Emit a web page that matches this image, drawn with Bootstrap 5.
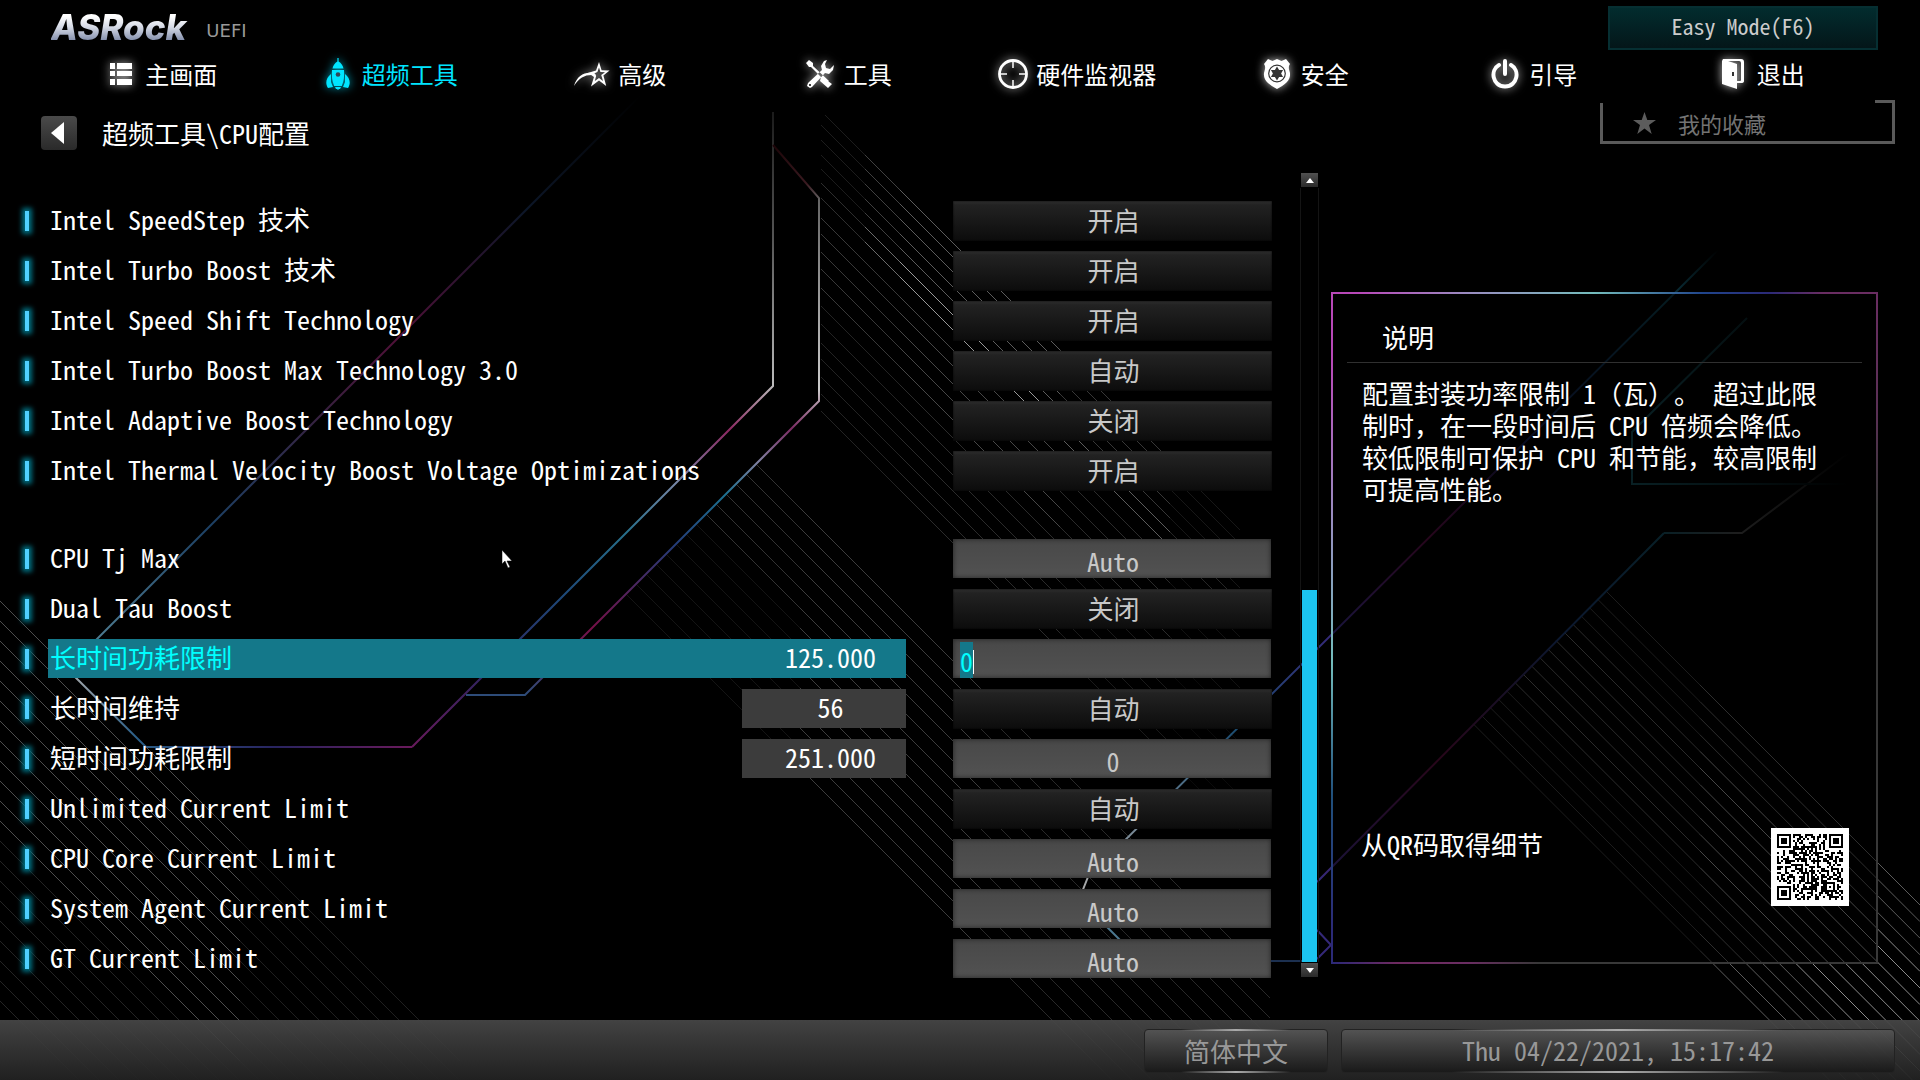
<!DOCTYPE html>
<html lang="zh-CN">
<head>
<meta charset="utf-8">
<meta name="viewport" content="width=device-width, initial-scale=1">
<title>ASRock UEFI</title>
<link rel="stylesheet" href="https://cdn.jsdelivr.net/npm/bootstrap@5.3.0/dist/css/bootstrap.min.css">
<style>
body{background:#000;color:#fff;font-family:"Noto Sans Mono CJK SC","Noto Sans CJK SC","Liberation Mono",monospace;font-size:26px;line-height:32px;text-spacing-trim:space-all}
.backdrop{z-index:0}
.layer{z-index:1}
.topbar{height:50px;padding:6px 42px 0 51px}
.logo{font:italic 800 35px/42px Inter,sans-serif;background:linear-gradient(#fff 25%,#d5dae6 50%,#7b87a6 85%);-webkit-background-clip:text;background-clip:text;color:transparent;padding-right:4px}
.logo-sub{font:400 18px/18px "DejaVu Sans",sans-serif;color:#999;padding-top:8px}
.easy{width:270px;height:44px;font-size:22px;line-height:24px;color:#ccc;background:linear-gradient(#022c2e,#041619);border:2px solid #062f32;padding:0 0 6px}
.mainnav{padding:0 43px 2px 49px;height:50px}
.mainnav .nav-link{color:#fff;font-size:24px;line-height:32px;white-space:nowrap}
.mainnav .nav-link.active{color:#00e5ff}
.mainnav svg{filter:drop-shadow(0 0 5px #bbb)}
.mainnav .active svg{filter:drop-shadow(0 0 5px #00a0b8)}
.crumbs{height:50px;padding:0 25px 0 41px}
.back{width:36px;height:34px;margin-top:16px;background:linear-gradient(#4a4a4a,#2a2a2a);border:0;border-radius:4px}
.trail{margin:17px 0 0 25px}
.fav{width:295px;height:44px;font-size:22px;color:#737373;border:0 solid #5a5a5a;border-width:0 3px 3px 0;padding:5px 0 0 33px}
.fav::before{content:"";position:absolute;left:0;top:3px;bottom:0;width:3px;background:#5a5a5a}
.fav::after{content:"";position:absolute;right:0;top:0;width:17px;height:3px;background:#5a5a5a}
.work{padding:23px 42px 0 0}
.settings{padding:28px 29px 0 0}
.setting{height:40px;margin-bottom:10px}
.setting.split{margin-top:48px}
.mark-col{width:48px}
.tick{width:4px;height:20px;background:#4fd0ff;box-shadow:0 0 5px 3px #006f80;margin-left:25px}
.name{padding-left:2px;height:39px;line-height:36px;margin-right:47px}
.reading{width:164px;height:39px;background:#3c3c3c;padding-left:13px;text-align:center}
.active-row .name{background:#14788a;color:#0ff}
.active-row .reading{background:transparent;color:#fff}
.ctl{width:319px;height:40px;border-radius:0;font-size:26px;line-height:32px;color:#c8c8c8;text-align:center;border:0;padding:0}
select.ctl{background:linear-gradient(#303030,#222 10%,#0c0c0c);text-align-last:center;appearance:none;box-shadow:inset 0 0 2px #000;padding-left:2px;padding-bottom:2px}
select.ctl:focus{color:#fff}
input.ctl{height:39px;width:318px;margin-right:1px;background:linear-gradient(#484848,#525252);box-shadow:inset 0 0 5px #222;padding:4px 0 0 2px}
input.editing{text-align:left;padding-left:7px;color:#0ff;caret-color:#fff}
input:focus{outline:0}
input::selection{background:#14788a;color:#0ff}
.caret{left:20px;top:11px;width:1px;height:24px;background:#fff}
.scroller{width:17px;margin-bottom:43px}
.arrow{width:17px;height:14px;border:0;background:linear-gradient(#505050,#2a2a2a);padding:0;line-height:0}
.track{box-shadow:-2px 0 0 -1px #141414,2px 0 0 -1px #141414}
.thumb{height:48%;width:15px;background:#1cc5f0;margin:0 1px 1px}
.help{width:547px;margin:119px 0 56px 13px;padding:2px 16px;
  background:
    linear-gradient(90deg,#b848b8 5%,#9a8cc0 25%,#74bcbc 48%,#20458c 68%,#2b2a78 80%,#6a2d62 90%) top/100% 2px no-repeat,
    linear-gradient(#b848b8 10%,#9a8cc0 33%,#74bcbc 55%,#20507c 75%,#2b2a78 95%) left/2px 100% no-repeat,
    linear-gradient(90deg,#2b2878,#6e2a60 12%,#6a2d62 25%,#383838 38%) bottom/100% 2px no-repeat,
    linear-gradient(#6a2d62,#5a3055 18%,#383838 32%) right/2px 100% no-repeat,
    rgba(0,0,0,.5)}
.help h2{font-size:26px;line-height:36px;font-weight:400;margin:0;padding:25px 0 7px 35px;border-bottom:1px solid #303030}
.help p{margin:14px 35px 0 15px}
.qr-line{padding:0 13px 56px 14px}
.statusbar{height:60px;background:linear-gradient(rgba(70,70,70,.95),rgba(60,60,60,.9) 35%,rgba(34,34,34,.95));padding:9px 25px 7px;gap:13px}
.pill{height:44px;border:1px solid #222;border-radius:4px;background:linear-gradient(rgba(88,88,88,.8),rgba(24,24,24,.85));color:#989898;line-height:40px;padding:0;position:relative;text-align:center}
.pill::before,.pill::after{content:"";position:absolute;left:20%;right:20%;height:2px;top:-1px;background:linear-gradient(90deg,transparent,#aaa,transparent)}
.pill::after{top:auto;bottom:-1px}
.lang{width:184px}
.clock{width:554px}
.pointer{left:502px;top:550px;z-index:3}
</style>
<script src="https://cdn.jsdelivr.net/npm/bootstrap@5.3.0/dist/js/bootstrap.bundle.min.js"></script>
</head>
<body class="d-flex flex-column min-vh-100 position-relative overflow-hidden">

<svg class="backdrop position-absolute top-0 start-0 w-100 h-100" viewBox="0 0 1920 1080" preserveAspectRatio="none" fill="none" stroke-width="2" aria-hidden="true">
  <defs>
    <linearGradient id="ga" gradientUnits="userSpaceOnUse" x1="640" y1="96" x2="67" y2="669">
      <stop offset="0" stop-color="#000"/><stop offset=".2" stop-color="#0c1628"/><stop offset=".42" stop-color="#501038"/><stop offset=".55" stop-color="#38203f"/><stop offset=".75" stop-color="#1c4064"/><stop offset="1" stop-color="#5a8a9c"/>
    </linearGradient>
    <linearGradient id="gb" gradientUnits="userSpaceOnUse" x1="0" y1="110" x2="0" y2="750">
      <stop offset="0" stop-color="#1a1a1a"/><stop offset=".2" stop-color="#555"/><stop offset=".43" stop-color="#bbb"/><stop offset=".5" stop-color="#8c2862"/><stop offset=".58" stop-color="#7a88a8"/><stop offset=".66" stop-color="#28708c"/><stop offset=".76" stop-color="#1e4878"/><stop offset=".88" stop-color="#302460"/><stop offset="1" stop-color="#6a1a5c"/>
    </linearGradient>
    <linearGradient id="gc" gradientUnits="userSpaceOnUse" x1="0" y1="145" x2="0" y2="700">
      <stop offset="0" stop-color="#1c0508"/><stop offset=".07" stop-color="#3a1a20"/><stop offset=".1" stop-color="#666"/><stop offset=".44" stop-color="#ccc"/><stop offset=".51" stop-color="#7c2c64"/><stop offset=".57" stop-color="#8080a0"/><stop offset=".63" stop-color="#1c7090"/><stop offset=".72" stop-color="#243c78"/><stop offset=".87" stop-color="#761048"/><stop offset="1" stop-color="#28507c"/>
    </linearGradient>
    <linearGradient id="gd" gradientUnits="userSpaceOnUse" x1="67" y1="0" x2="412" y2="0">
      <stop offset="0" stop-color="#aaa"/><stop offset=".2" stop-color="#2b5f88"/><stop offset=".6" stop-color="#282460"/><stop offset="1" stop-color="#6a1a5c"/>
    </linearGradient>
    <linearGradient id="ge" gradientUnits="userSpaceOnUse" x1="0" y1="250" x2="0" y2="890">
      <stop offset="0" stop-color="#000"/><stop offset=".08" stop-color="#0a3440"/><stop offset=".3" stop-color="#101840"/><stop offset=".45" stop-color="#4c0c38"/><stop offset=".6" stop-color="#342878"/><stop offset=".75" stop-color="#1c4c70"/><stop offset="1" stop-color="#aaa"/>
    </linearGradient>
    <linearGradient id="gf" gradientUnits="userSpaceOnUse" x1="0" y1="533" x2="0" y2="882">
      <stop offset="0" stop-color="#104050"/><stop offset=".3" stop-color="#183060"/><stop offset=".65" stop-color="#500c34"/><stop offset="1" stop-color="#342878"/>
    </linearGradient>
    <linearGradient id="gh" gradientUnits="userSpaceOnUse" x1="1664" y1="0" x2="1850" y2="0">
      <stop offset="0" stop-color="#14404c"/><stop offset=".4" stop-color="#3c3c3c"/><stop offset="1" stop-color="#000"/>
    </linearGradient>
    <linearGradient id="gi" gradientUnits="userSpaceOnUse" x1="1850" y1="0" x2="1632" y2="0">
      <stop offset="0" stop-color="#000"/><stop offset="1" stop-color="#124048"/>
    </linearGradient>
  </defs>
  <g id="hatching" stroke="#fff" stroke-width="1"></g>
  <path stroke="url(#ga)" d="M640 96 67 669"/>
  <path stroke="url(#gd)" d="M67 669 146 747H412"/>
  <path stroke="url(#gb)" d="M412 747 773 386V112"/>
  <path stroke="url(#gc)" d="M773 145 819 198V401L525 695H466"/>
  <path stroke="url(#ge)" d="M1718 250 1088 877 1082 892"/>
  <path stroke="#4c7890" d="M1100 920 1141 961"/>
  <path stroke="#1c3050" d="M1141 961H1302"/>
  <path stroke="url(#gf)" d="M1317 882 1664 533 "/>
  <path stroke="url(#gh)" d="M1664 533H1742L1850 452"/>
  <path stroke="url(#gi)" d="M1747 318 1632 432V484H1850"/>
  <path stroke="#342878" d="M1317 930 1331 945 1317 959"/>
</svg>

<header class="layer position-relative">
  <div class="topbar d-flex justify-content-between align-items-start">
    <div class="d-flex align-items-center gap-3 pt-0">
      <span class="logo">ASRock</span><span class="logo-sub">UEFI</span>
    </div>
    <button type="button" class="btn easy rounded-0">Easy Mode(F6)</button>
  </div>

  <nav class="mainnav nav nav-justified align-items-center" aria-label="主菜单">
    <a class="nav-link p-0 d-flex justify-content-center align-items-center gap-2" href="#">
      <svg width="28" height="22" viewBox="0 0 28 22" fill="currentColor"><path d="M1 0h5v6H1zM8 0h15v6H8zM1 8h5v5H1zM8 8h15v5H8zM1 16h5v6H1zM8 16h15v6H8z"/></svg>主画面</a>
    <a class="nav-link active p-0 d-flex justify-content-center align-items-center gap-2" href="#" aria-current="page">
      <svg width="28" height="32" viewBox="0 0 28 32" fill="currentColor"><path d="M11.400 0h1.200v3.500c2.600 1.600 4.200 4 4.900 7h-11c.7-3 2.300-5.400 4.900-7zM6 12h12c.6 6-.2 11-2.200 16H8.200C6.200 23 5.400 18 6 12z"/><path d="M5 16v8l2 5-5 1c-3-5-2-10 3-14zM19 16v8l-2 5 5 1c3-5 2-10-3-14zM9 29h6l-1 2h-1l-1 1-1-1h-1z"/><circle cx="12" cy="16.500" r="2.300" fill="#345"/></svg>超频工具</a>
    <a class="nav-link p-0 d-flex justify-content-center align-items-center gap-2" href="#">
      <svg width="36" height="27" viewBox="0 0 36 27" fill="currentColor"><path fill-rule="evenodd" d="m25 1 2.600 8.200 8 .2-6.200 5.200 2.800 10.400-7.200-5.400-8 6 3-9.600-3.600-2.400L12 12.500l10-3zM25 6.500l-1.600 4.500-3.400 1.500 2.200 2.200-1.400 5.300L25 17l4 3-1.800-6 3.800-2.800-4.600-.3z"/><path d="M0 25C3 14 12 10 21 12.500l1 2C13 13 6 15.500 0 25z"/></svg>高级</a>
    <a class="nav-link p-0 d-flex justify-content-center align-items-center gap-2" href="#">
      <svg width="30" height="28" viewBox="0 0 30 28" fill="currentColor"><path d="M0 3 3 0l4 3v3l16 15-2 2L5 7H3zM15 17l4 2 7 5-4 4-8-7zM21 0l-3 1-3 5 1 4L2 23l-1 3 3 2 2-1L19 13l4 1 4-4 1-5-4 4-4-1-1-4z"/><circle cx="4" cy="25" r="1" fill="#000"/></svg>工具</a>
    <a class="nav-link p-0 d-flex justify-content-center align-items-center gap-2" href="#">
      <svg width="30" height="30" viewBox="0 0 30 30" fill="none" stroke="currentColor"><circle cx="15" cy="15" r="13.500" stroke-width="2.800"/><path d="M15 2v7M15 21v7M2 15h7M21 15h7" stroke-width="1.500"/></svg>硬件监视器</a>
    <a class="nav-link p-0 d-flex justify-content-center align-items-center gap-2" href="#">
      <svg width="30" height="30" viewBox="0 0 30 30"><path fill="currentColor" d="m5 0 4.500 2L14 0l4.500 2L23 0l4 5c-2 3-1 5 0 9 1 8-6 12-13 16C7 26 0 22 1 14c1-4 2-6 0-9z"/><circle cx="14" cy="14.500" r="8.300" fill="none" stroke="#333" stroke-width="1.200"/><path fill="#333" d="m14 7.500 2.100 3.500h4l-2 3.500 2 3.500h-4L14 21.500 11.900 18h-4l2-3.500-2-3.500h4z"/></svg>安全</a>
    <a class="nav-link p-0 d-flex justify-content-center align-items-center gap-2" href="#">
      <svg width="30" height="30" viewBox="0 0 30 30" fill="none" stroke="currentColor" stroke-width="4" stroke-linecap="round"><path d="M14 2v13M8 6C-1 11 1 27 14 27.500 27 27 29 11 20 6"/></svg>引导</a>
    <a class="nav-link p-0 d-flex justify-content-center align-items-center gap-2" href="#">
      <svg width="28" height="30" viewBox="0 0 28 30"><path fill="currentColor" fill-rule="evenodd" d="M2 0h18q3 0 3 3v19q0 2-3 2h-4v6L1 25V2zM16 22h3q1 0 1-1V4q0-2-2-2H7l9 3z"/><path stroke="#333" stroke-width="2" d="M12 13v4"/></svg>退出</a>
  </nav>

  <div class="crumbs d-flex align-items-start">
    <button type="button" class="back p-0 d-flex align-items-center justify-content-center" aria-label="返回"><svg width="18" height="22" viewBox="0 0 18 22"><path fill="#fff" d="M14 0v22L1 11z"/></svg></button>
    <div class="trail">超频工具\CPU配置</div>
    <a class="fav ms-auto position-relative d-flex align-items-center text-decoration-none" style="gap:22px" href="#">
      <svg width="23" height="22" viewBox="0 0 23 22" fill="#5c5c5c"><path d="m11.500 0 2.800 8H23l-7 5 2.700 9-7.200-5.500L4.300 22 7 13 0 8h8.700z"/></svg>我的收藏</a>
  </div>
</header>

<main class="work layer position-relative d-flex flex-grow-1">
  <form class="settings flex-grow-1" id="settings" onsubmit="return false"></form>

  <div class="scroller d-flex flex-column">
    <button type="button" class="arrow" aria-label="向上"><svg width="8" height="5"><path fill="#fff" d="M4 0 8 5H0z"/></svg></button>
    <div class="track flex-grow-1 d-flex flex-column justify-content-end"><div class="thumb"></div></div>
    <button type="button" class="arrow" aria-label="向下"><svg width="8" height="5"><path fill="#fff" d="M0 0H8L4 5z"/></svg></button>
  </div>

  <aside class="help d-flex flex-column">
    <h2>说明</h2>
    <p>配置封装功率限制 1（瓦）。 超过此限制时，在一段时间后 CPU 倍频会降低。较低限制可保护 CPU 和节能，较高限制可提高性能。</p>
    <div class="qr-line d-flex justify-content-between align-items-start mt-auto">
      <span>从QR码取得细节</span>
      <svg id="qr" width="78" height="78" viewBox="0 0 39 39" shape-rendering="crispEdges" role="img" aria-label="QR"><path fill="#fff" d="M0 0h39v39H0z"/></svg>
    </div>
  </aside>
</main>

<footer class="statusbar layer position-relative d-flex justify-content-end">
  <button type="button" class="pill lang">简体中文</button>
  <div class="pill clock">Thu 04/22/2021, 15:17:42</div>
</footer>

<svg class="pointer position-absolute" width="11" height="18" viewBox="0 0 11 18" aria-hidden="true"><path fill="#fff" stroke="#000" stroke-width=".5" d="M0 0v14l3-3 3 7 2-1-3-6h5z"/></svg>

<script>
// kind: s = drop-down, t = text box
const rows = [
  ['Intel SpeedStep 技术','s','开启'],
  ['Intel Turbo Boost 技术','s','开启'],
  ['Intel Speed Shift Technology','s','开启'],
  ['Intel Turbo Boost Max Technology 3.0','s','自动'],
  ['Intel Adaptive Boost Technology','s','关闭'],
  ['Intel Thermal Velocity Boost Voltage Optimizations','s','开启'],
  ['CPU Tj Max','t','Auto','','split'],
  ['Dual Tau Boost','s','关闭'],
  ['长时间功耗限制','t','0','125.000','active-row'],
  ['长时间维持','s','自动','56'],
  ['短时间功耗限制','t','0','251.000'],
  ['Unlimited Current Limit','s','自动'],
  ['CPU Core Current Limit','t','Auto'],
  ['System Agent Current Limit','t','Auto'],
  ['GT Current Limit','t','Auto']
];
document.getElementById('settings').innerHTML = rows.map(([name, kind, value, reading, cls], i) => {
  const on = cls === 'active-row';
  const control = kind === 's'
    ? `<select class="ctl" id="c${i}"><option>${value}</option></select>`
    : `<input class="ctl${on ? ' editing' : ''}" type="text" id="c${i}" value="${value}">`;
  return `<div class="setting d-flex ${cls || ''}">
    <div class="mark-col d-flex align-items-center"><div class="tick"></div></div>
    <div class="name flex-grow-1 d-flex justify-content-between"><label for="c${i}">${name}</label>${reading ? `<span class="reading">${reading}</span>` : ''}</div>
    <div class="position-relative">${control}${on ? '<span class="caret position-absolute"></span>' : ''}</div></div>`;
}).join('');
document.querySelector('.editing').select();

// Diagonal hatching: each entry is a 45-degree line y = x + d between two x values
let lines = '';
const hatch = (d, x1, x2, o) => { lines += `<path stroke-opacity="${o}" d="M${x1} ${x1 + d} ${x2} ${x2 + d}"/>`; };
[-710,-696,-681,-666,-652,-638,-623,-603,-587,-569,-552,-533,-515,-497,-478,-462,-444,-427,-410].forEach((d, i) => {
  const o = i < 5 ? .36 : i < 7 ? .6 : i < 12 ? .28 : .17;
  const x1 = Math.max(821, 115 - d);
  if (i < 7) { hatch(d, x1, 865, o * .3); hatch(d, 865, 900, o * .7); }
  else hatch(d, x1, 900, o * .8);
  hatch(d, 900, 1060, o);
  hatch(d, 1060, 1170, o * .6);
  hatch(d, 1170, 1240, o * .25);
});
for (let i = 0; i < 14; i++) { const d = -292 + i * 20, s = (1220 - d) / 2; hatch(d, s, 800, i < 6 ? .2 : .08); hatch(d, 800, 980, .24); hatch(d, 980, 1270, .16); }
for (let i = 0; i < 21; i++) { const d = 601 + i * 20; hatch(d, 0, 240, i < 12 ? .3 : .14); hatch(d, 240, 460, .12); }
for (let i = 0; i < 17; i++) { const d = -1015 + i * 16.6, s = (2197 - d) / 2; hatch(d, s, 1700, i > 3 && i < 12 ? .34 : .22); hatch(d, 1700, 1920, i > 3 && i < 12 ? .55 : .36); }
document.getElementById('hatching').innerHTML = lines;

// 33 x 33 module code with three finders and one alignment square
let seed = 7, cells = '';
const ring = (x, y, cx, cy, r) => { const m = Math.max(Math.abs(x - cx), Math.abs(y - cy)); return m <= r ? m : -1; };
for (let y = 0; y < 33; y++) for (let x = 0; x < 33; x++) {
  seed = (seed * 1103515245 + 12345) % 2147483648;
  let dark = (seed >> 16) & 1;
  for (const [cx, cy] of [[3, 3], [29, 3], [3, 29]]) { const m = ring(x, y, cx, cy, 4); if (m >= 0) dark = m !== 2 && m !== 4; }
  const a = ring(x, y, 26, 26, 2); if (a >= 0) dark = a !== 1;
  if (dark) cells += `M${x + 3} ${y + 3}h1v1h-1z`;
}
document.getElementById('qr').insertAdjacentHTML('beforeend', `<path fill="#000" d="${cells}"/>`);
</script>
</body>
</html>
